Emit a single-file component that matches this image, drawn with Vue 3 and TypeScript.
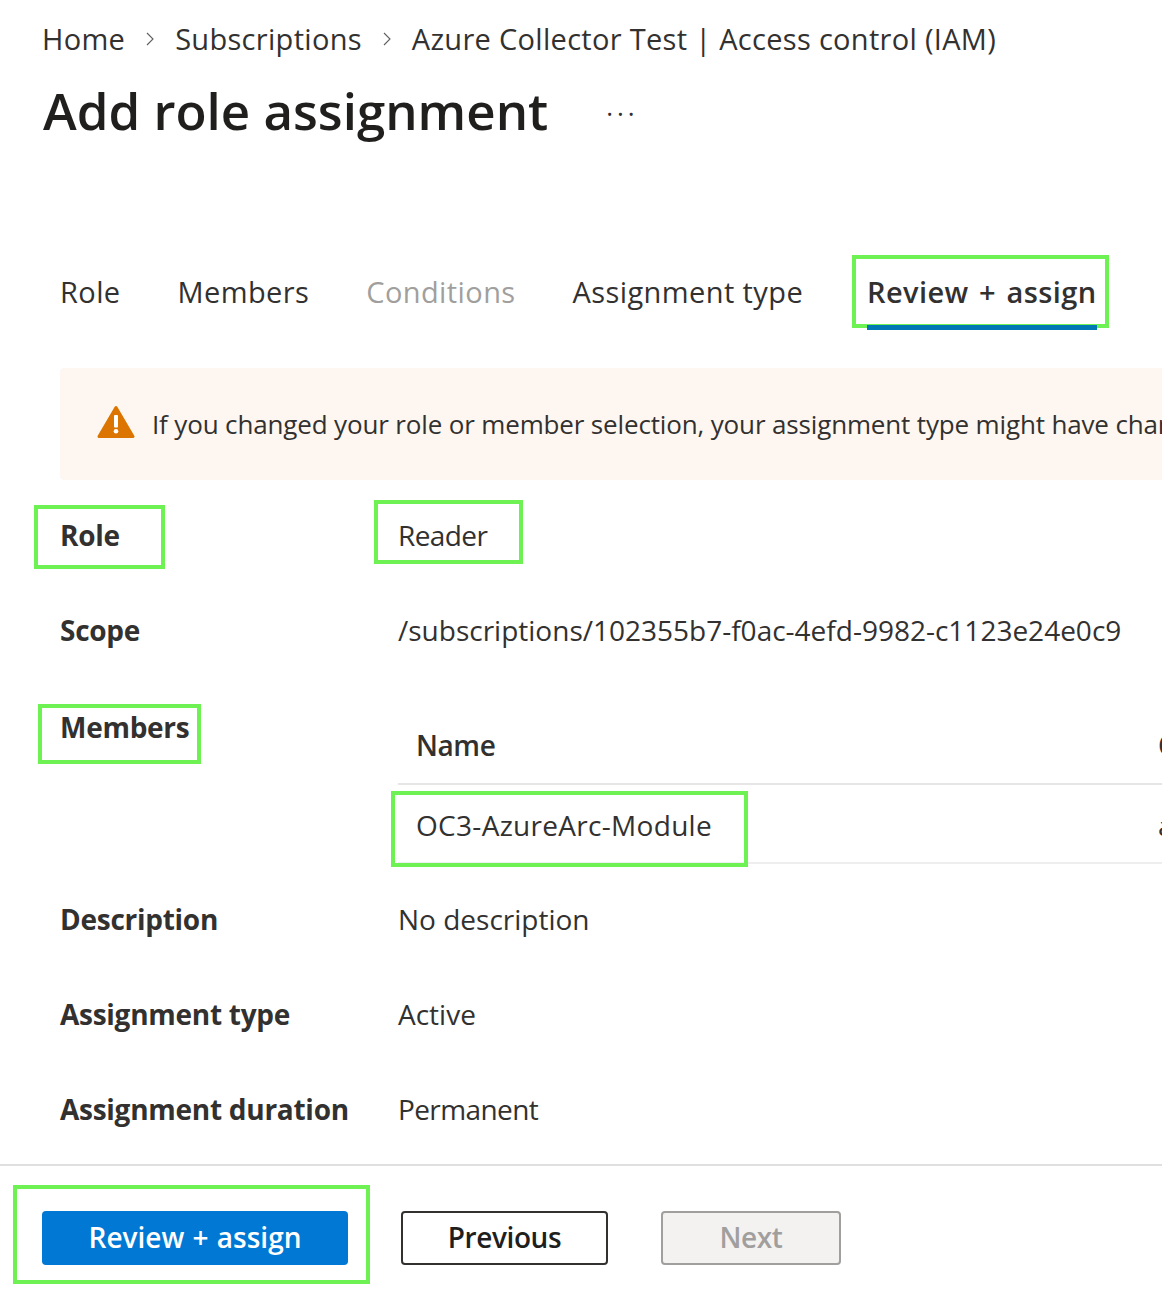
<script setup lang="ts">
interface Tab { label: string; state?: 'disabled' | 'active' }
const tabs: Tab[] = [
  { label: 'Role' },
  { label: 'Members' },
  { label: 'Conditions', state: 'disabled' },
  { label: 'Assignment type' },
  { label: 'Review + assign', state: 'active' },
]
const crumbs = ['Home', 'Subscriptions', 'Azure Collector Test | Access control (IAM)']
</script>

<template>
  <div class="page">
    <header class="head">
      <nav class="crumbs">
        <template v-for="(c, i) in crumbs" :key="c">
          <svg v-if="i > 0" class="chev" width="10" height="16" viewBox="0 0 10 16"><path d="M2 2l6 6-6 6" fill="none" stroke="#605e5c" stroke-width="1.1"/></svg>
          <span>{{ c }}</span>
        </template>
      </nav>
      <div class="title-row">
        <h1>Add role assignment</h1>
        <span class="more">···</span>
      </div>
    </header>

    <div class="tabs">
      <div v-for="t in tabs" :key="t.label" class="tab" :class="t.state">
        {{ t.label }}
        <i v-if="t.state === 'active'" class="hl hl-tab"></i>
      </div>
    </div>

    <div class="banner">
      <svg width="38" height="34" viewBox="0 0 38 34" class="warn">
        <path d="M19 2.5 36 31.5H2Z" fill="#db7500" stroke="#db7500" stroke-width="3" stroke-linejoin="round"/>
        <rect x="17" y="10" width="4" height="12.5" rx="1" fill="#fff"/>
        <circle cx="19" cy="26.2" r="2.3" fill="#fff"/>
      </svg>
      <span>If you changed your role or member selection, your assignment type might have changed.</span>
    </div>

    <dl class="details">
      <div class="row">
        <dt><span class="mark">Role<i class="hl hl-role"></i></span></dt>
        <dd class="tight"><span class="mark">Reader<i class="hl hl-reader"></i></span></dd>
      </div>
      <div class="row">
        <dt>Scope</dt>
        <dd>/subscriptions/102355b7-f0ac-4efd-9982-c1123e24e0c9</dd>
      </div>
      <div class="row row-members">
        <dt><span class="mark">Members<i class="hl hl-members"></i></span></dt>
        <dd>
          <div class="table">
            <div class="tr th"><span>Name</span><span>Object ID</span></div>
            <div class="tr td"><span class="mark">OC3-AzureArc-Module<i class="hl hl-name"></i></span><span>a</span></div>
          </div>
        </dd>
      </div>
      <div class="row"><dt>Description</dt><dd>No description</dd></div>
      <div class="row"><dt>Assignment type</dt><dd>Active</dd></div>
      <div class="row"><dt>Assignment duration</dt><dd class="tight">Permanent</dd></div>
    </dl>

    <footer class="foot">
      <button class="btn primary">Review + assign<i class="hl hl-btn"></i></button>
      <button class="btn outline">Previous</button>
      <button class="btn off">Next</button>
    </footer>
  </div>
</template>

<style>
html, body { margin: 0; background: #fff; }
</style>

<style scoped>
.page {
  width: 1162px;
  height: 1291px;
  overflow: hidden;
  display: flex;
  flex-direction: column;
  background: #fff;
  color: #323130;
  font-family: "Open Sans", "Noto Sans", sans-serif;
  font-size: 28px;
  line-height: 38px;
  white-space: nowrap;
}
.head { padding: 20px 0 0 42px; height: 234px; box-sizing: border-box; }
.crumbs { display: flex; align-items: center; height: 38px; font-size: 29px; letter-spacing: 0.3px; }
.chev { margin: 0 20px 0 20px; }
.title-row { display: flex; align-items: center; margin-top: 15px; height: 74px; }
h1 { margin: 0 0 0 1px; font-size: 51px; font-weight: 600; line-height: 74px; color: #201f1e; letter-spacing: 0; }
.more { margin: 6px 0 0 58px; font-size: 26px; line-height: 20px; letter-spacing: 4px; color: #323130; }
.tabs { display: flex; gap: 57px; padding-left: 60px; height: 134px; box-sizing: border-box; padding-top: 39px; font-size: 29px; letter-spacing: 0.4px; }
.tab { position: relative; height: 38px; }
.tab.disabled { color: #a19f9d; }
.tab.active { font-weight: 600; word-spacing: 2.5px; margin-left: 7px; }
.tab.active::after { content: ""; position: absolute; left: 0; right: 0; top: 52px; height: 5px; background: #0078b4; }
.banner {
  margin-left: 60px;
  height: 112px;
  display: flex;
  align-items: center;
  gap: 17px;
  padding-left: 37px;
  background: #fef7f1;
  border-radius: 4px 0 0 4px;
  flex: none;
  font-size: 26px;
  letter-spacing: -0.15px;
}
.warn { flex: none; margin-top: -4px; }
.details { margin: 7px 0 0; padding: 0 0 0 60px; flex: none; height: 677px; }
.row { display: grid; grid-template-columns: 338px 1fr; height: 95px; align-items: center; font-size: 28px; letter-spacing: 0; }
.row dt { font-weight: 700; color: #323130; letter-spacing: -0.27px; }
.row dd { margin: 0; }
.row dd.tight { letter-spacing: -0.6px; }
.row-members { height: 194px; align-items: start; padding-top: 31px; box-sizing: border-box; }
.mark { position: relative; display: inline-block; }
.table { margin-top: 18px; }
.tr { display: grid; grid-template-columns: 742px 200px; padding-left: 18px; }
.th { height: 59px; box-sizing: border-box; font-weight: 600; letter-spacing: -0.4px; border-bottom: 2px solid #e6e6e6; }
.td { height: 79px; align-items: center; padding-top: 2px; letter-spacing: 0.3px; border-bottom: 2px solid #eeeeee; box-sizing: border-box; }
.hl { position: absolute; border: 4px solid #6ef153; box-sizing: border-box; pointer-events: none; display: block; }
.hl-tab { left: -15px; right: -12px; top: -18px; height: 73px; }
.hl-role { left: -26px; top: -10.5px; width: 131px; height: 64px; }
.hl-reader { left: -24px; top: -16px; width: 149px; height: 64px; }
.hl-members { left: -22px; top: -4px; width: 163px; height: 60px; }
.hl-name { left: -25px; top: -15px; width: 357px; height: 76px; }
.foot {
  flex: 1;
  border-top: 2px solid #e0e0e0;
  padding: 45px 0 0 42px;
  display: flex;
  align-items: flex-start;
  gap: 53px;
}
.btn {
  position: relative;
  height: 54px;
  box-sizing: border-box;
  border-radius: 4px;
  font: 600 28px "Open Sans", "Noto Sans", sans-serif;
  letter-spacing: -0.4px;
  padding: 0 0 2px;
}
.primary { width: 306px; background: #0078d4; border: none; color: #fff; letter-spacing: 0; word-spacing: 1px; }
.outline { width: 207px; background: #fff; border: 2px solid #323130; color: #201f1e; }
.off { width: 180px; background: #f3f2f1; border: 2px solid #a19f9d; color: #a19f9d; }
.hl-btn { left: -29px; top: -26px; width: 357px; height: 99px; }
</style>
